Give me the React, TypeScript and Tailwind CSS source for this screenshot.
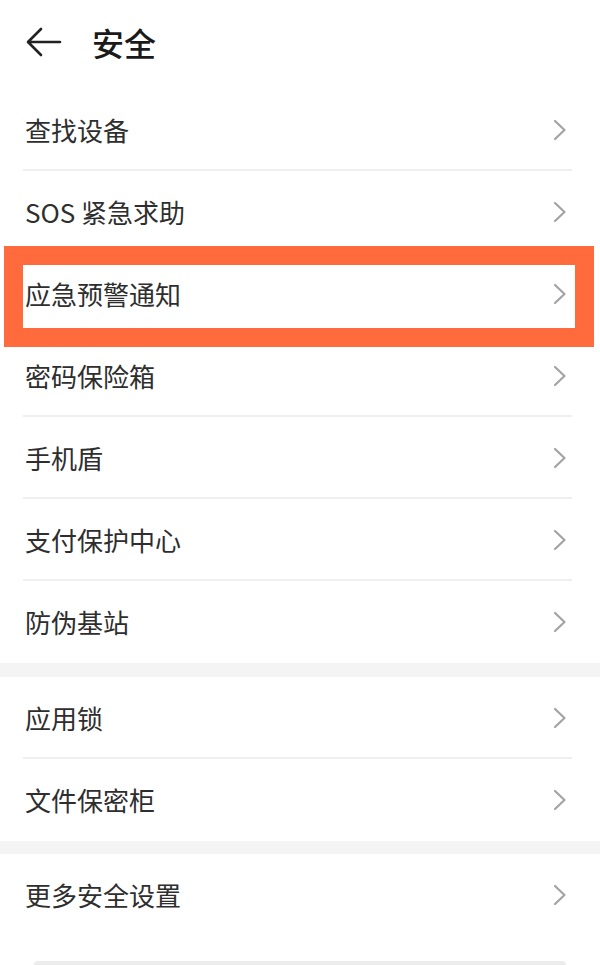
import React from "react";

const Chevron = () => (
  <svg width="16" height="22" viewBox="0 0 16 22" className="shrink-0">
    <path d="M3 2 L12.5 11 L3 20" fill="none" stroke="#a3a3a3" strokeWidth="2.2" strokeLinecap="round" strokeLinejoin="round" />
  </svg>
);

type RowProps = { label: string; divider?: boolean; highlight?: boolean };

const Row = ({ label, divider = true, highlight = false }: RowProps) => (
  <div className={highlight ? "relative z-10 h-[82px] bg-white" : "relative h-[82px] bg-white"}>
    <div className="flex h-full items-center justify-between pl-[25px] pr-[32px]">
      <span className="text-[26px] leading-none text-[#2e2e2e]">{label}</span>
      <Chevron />
    </div>
    {divider && <div className="absolute bottom-0 left-[23px] right-[28px] h-[2px] bg-[#efefef]" />}
    {highlight && (
      <div className="absolute top-[-7px] bottom-[-12px] left-[4px] right-[6px] border-[19px] border-[#ff6b3d]" />
    )}
  </div>
);

export default function App() {
  return (
    <div
      className="relative h-[965px] w-[600px] overflow-hidden bg-white"
      style={{ fontFamily: '"Noto Sans CJK SC", "Noto Sans", sans-serif' }}
    >
      <div className="flex h-[89px] items-center pb-[6px]">
        <svg width="40" height="34" viewBox="0 0 40 34" className="ml-[24px]">
          <path d="M36 17 H5 M17 4 L4 17 L17 30" fill="none" stroke="#222222" strokeWidth="2.6" strokeLinecap="round" strokeLinejoin="round" />
        </svg>
        <span className="ml-[28px] text-[32px] font-medium leading-none text-[#1a1a1a]">安全</span>
      </div>

      <Row label="查找设备" />
      <Row label="SOS 紧急求助" />
      <Row label="应急预警通知" highlight />
      <Row label="密码保险箱" />
      <Row label="手机盾" />
      <Row label="支付保护中心" />
      <Row label="防伪基站" divider={false} />

      <div className="h-[14px] bg-[#f4f4f4]" />

      <Row label="应用锁" />
      <Row label="文件保密柜" divider={false} />

      <div className="h-[13px] bg-[#f4f4f4]" />

      <Row label="更多安全设置" divider={false} />

      <div className="absolute bottom-0 left-[34px] right-[34px] h-[4px] rounded-t-sm bg-[#ececec]" />
    </div>
  );
}
